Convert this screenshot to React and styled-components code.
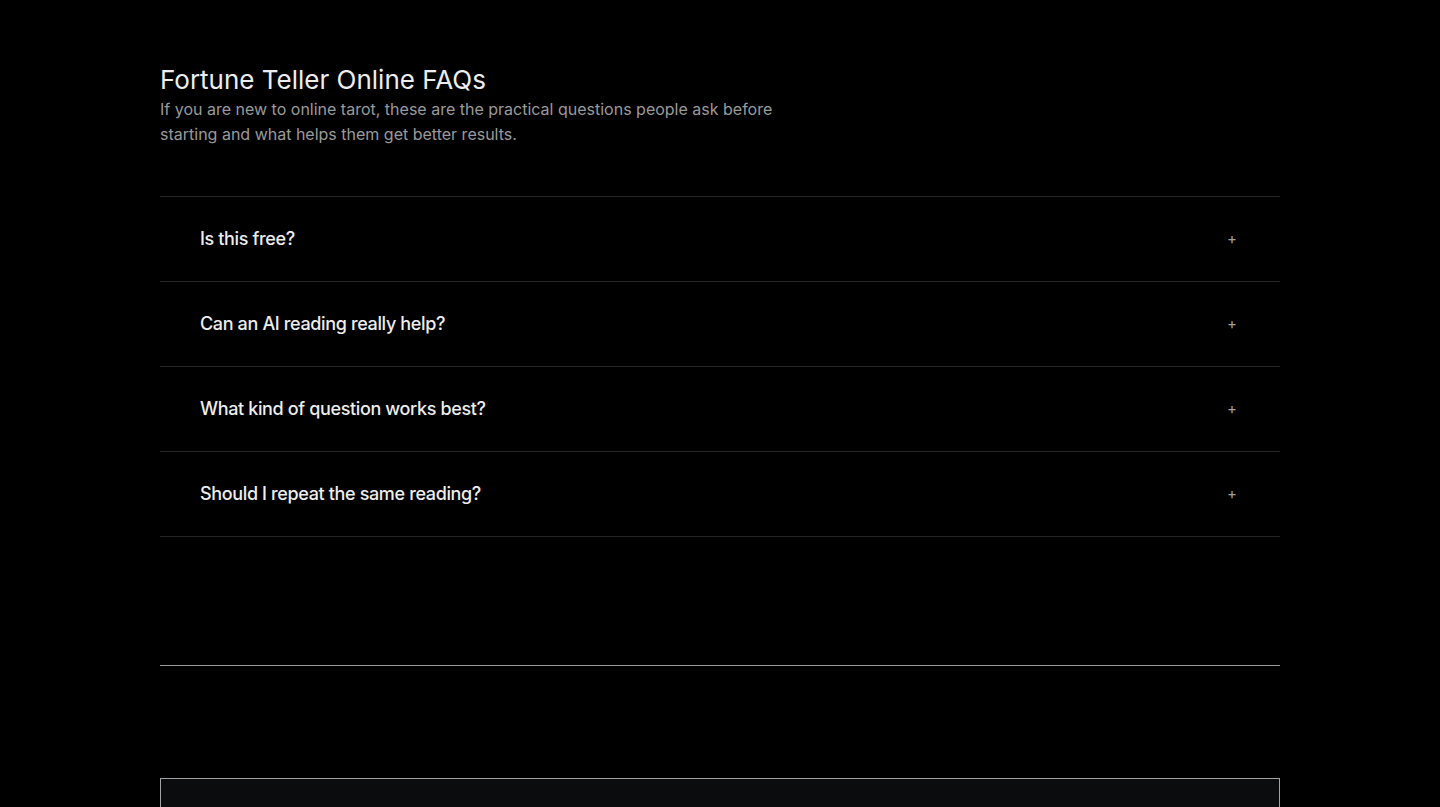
import React from "react";
import styled, { createGlobalStyle } from "styled-components";

const GlobalStyle = createGlobalStyle`
  html, body {
    margin: 0;
    padding: 0;
    background: #000;
    font-family: Inter, "Noto Sans", "Liberation Sans", sans-serif;
    -webkit-font-smoothing: antialiased;
  }
`;

const Page = styled.div`
  height: 807px;
  background: #000;
  color: #ededed;
  overflow: hidden;
`;

const Section = styled.section`
  width: 1120px;
  margin: 0 auto;
  padding-top: 64px;
`;

const Title = styled.h2`
  margin: 0;
  font-size: 26px;
  line-height: 32px;
  font-weight: 400;
  color: #ededed;
`;

const Intro = styled.p`
  margin: 1px 0 0;
  max-width: 640px;
  font-size: 16px;
  line-height: 25px;
  color: #9a9a9a;
`;

const List = styled.div`
  margin-top: 49px;
  border-top: 1px solid #262626;
`;

const Row = styled.button`
  display: flex;
  align-items: center;
  justify-content: space-between;
  width: 100%;
  height: 85px;
  padding: 0 40px;
  background: transparent;
  border: 0;
  border-bottom: 1px solid #262626;
  color: #ededed;
  font-family: inherit;
  text-align: left;
  cursor: pointer;
`;

const Question = styled.span`
  margin-top: -2px;
  font-size: 18px;
  font-weight: 500;
  letter-spacing: -0.02em;
`;

const Plus = styled.span`
  width: 18px;
  margin: -1px -1px 0 0;
  text-align: center;
  font-size: 15px;
  font-weight: 400;
  color: #a0a0a0;
`;

const Divider = styled.hr`
  margin: 128px 0 0;
  border: 0;
  border-top: 1px solid #9a9a9a;
`;

const Panel = styled.div`
  margin-top: 112px;
  height: 200px;
  border: 1px solid #a3a3a3;
  background: #0a0c0d;
`;

const questions = [
  "Is this free?",
  "Can an AI reading really help?",
  "What kind of question works best?",
  "Should I repeat the same reading?",
];

export default function App() {
  return (
    <Page>
      <GlobalStyle />
      <Section>
        <Title>Fortune Teller Online FAQs</Title>
        <Intro>
          If you are new to online tarot, these are the practical questions
          people ask before starting and what helps them get better results.
        </Intro>
        <List>
          {questions.map((q) => (
            <Row key={q}>
              <Question>{q}</Question>
              <Plus>+</Plus>
            </Row>
          ))}
        </List>
        <Divider />
        <Panel />
      </Section>
    </Page>
  );
}
